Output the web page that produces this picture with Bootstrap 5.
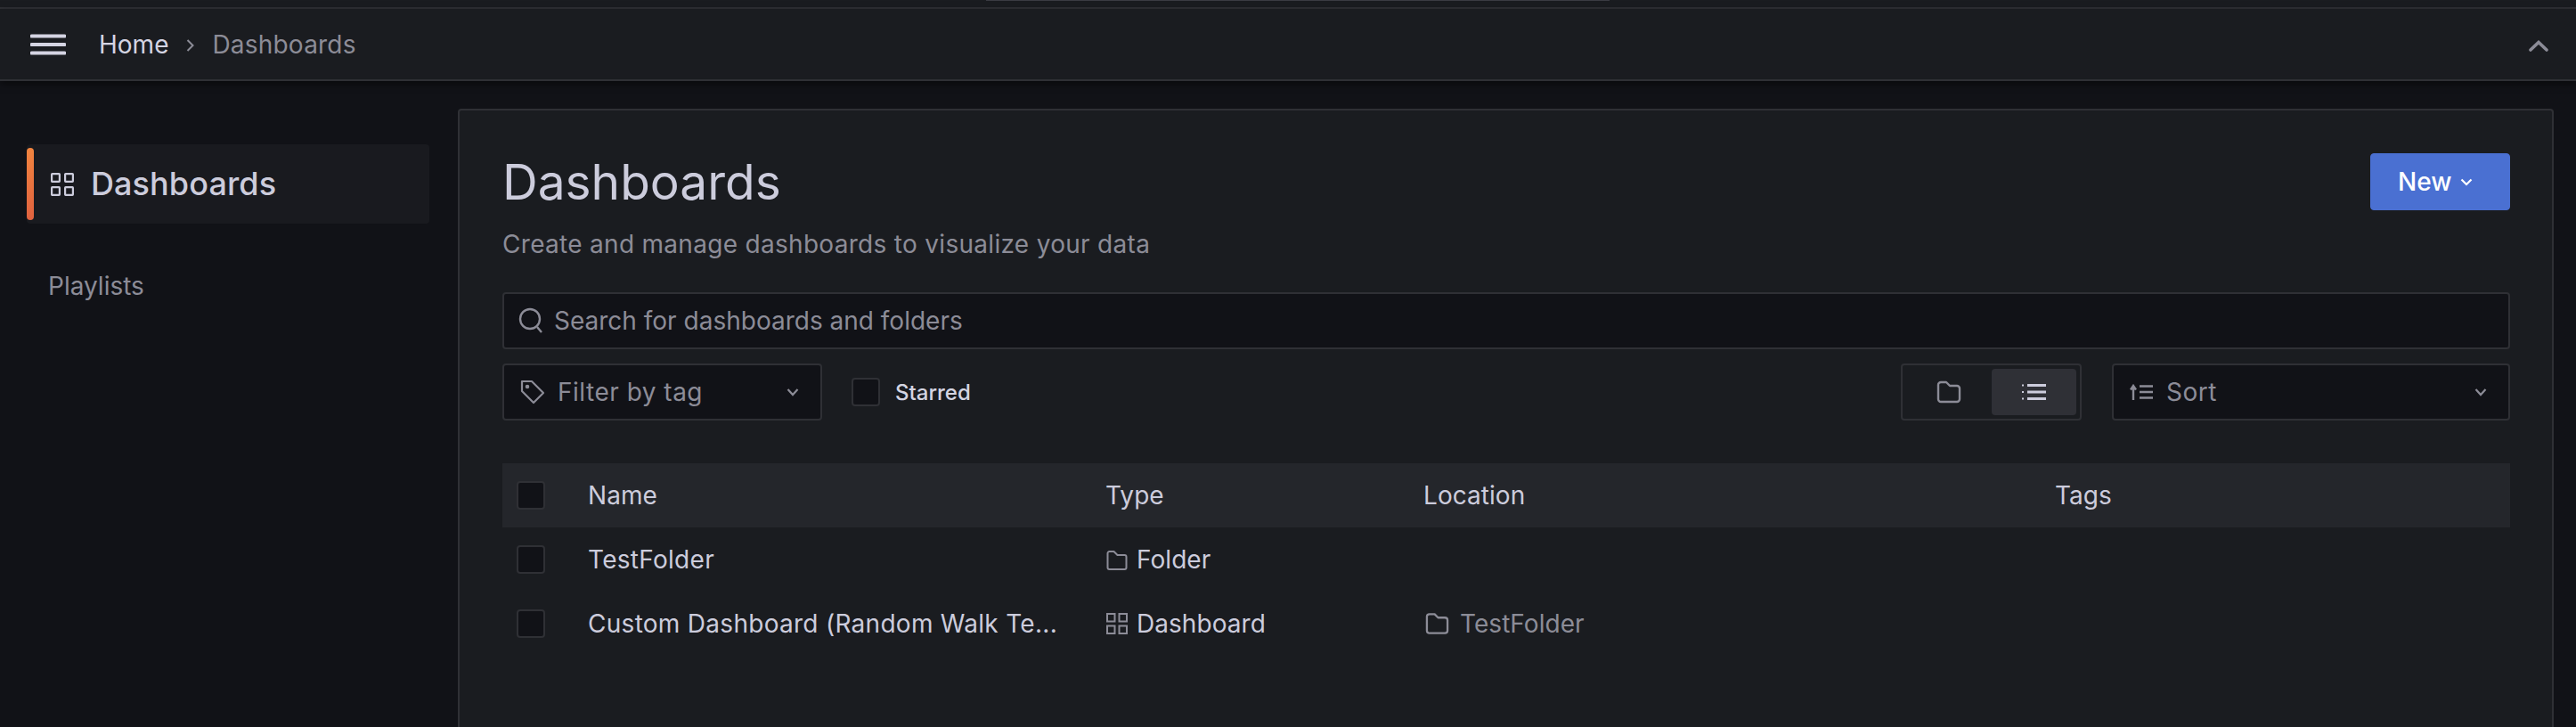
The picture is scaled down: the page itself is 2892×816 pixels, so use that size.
<!DOCTYPE html>
<html lang="en">
<head>
    <meta charset="UTF-8">
    <meta name="viewport" content="width=device-width, initial-scale=1.0">
    <title>Dashboards</title>
    <link href="https://cdn.jsdelivr.net/npm/bootstrap@5.3.0/dist/css/bootstrap.min.css" rel="stylesheet">
    <style>
        body {
            background: #111217;
            color: #ccccdc;
            font-family: Inter, "Liberation Sans", sans-serif;
            font-size: 28px;
            line-height: 1.4;
            height: 816px;
            overflow: hidden;
        }
        svg { display: block; flex: none; }
        .muted-text { color: #8c8c97; }
        .top-strip {
            height: 10px;
            flex: none;
            background: #1a1c20;
            border-bottom: 2px solid #2f3035;
            position: relative;
        }
        .top-strip::before {
            content: "";
            position: absolute;
            top: 0;
            left: 1107px;
            width: 700px;
            height: 1px;
            background: #3a3b42;
        }
        .top-bar {
            height: 81px;
            flex: none;
            background: #1a1c20;
            border-bottom: 2px solid #2f3035;
            padding: 0 31px 0 34px;
            box-shadow: 0 3px 8px rgba(0, 0, 0, .5);
            position: relative;
        }
        .crumb-home { margin: 2px 0 0 37px; color: #d4d4e2; }
        .crumb-sep { margin: 2px 20px 0; }
        .crumb-last { margin-top: 2px; letter-spacing: .2px; }
        .collapse-icon { margin-top: 4px; }
        .side-col { width: 514px; flex: none; padding: 71px 32px 0 30px; }
        .side-active {
            height: 89px;
            background: #191a1f;
            border-radius: 4px;
            padding-left: 27px;
            position: relative;
            font-size: 36px;
            font-weight: 500;
            letter-spacing: .1px;
            gap: 19px;
        }
        .side-active::before {
            content: "";
            position: absolute;
            left: 0;
            top: 4px;
            bottom: 4px;
            width: 8px;
            border-radius: 4px;
            background: linear-gradient(#f2843f, #e0623f);
        }
        .side-link { margin: 51px 0 0 24px; color: #8c8c97; }
        .main-panel {
            flex: 1;
            margin: 31px 25px 0 0;
            background: #1a1c20;
            border: 2px solid #2f3035;
            border-bottom: 0;
            border-radius: 4px 4px 0 0;
            padding: 48px 47px 0 48px;
        }
        .page-title { font-size: 55px; font-weight: 400; line-height: 64px; margin: 0; color: #ccccdc; }
        .page-sub { color: #8c8c97; margin: 19px 0 0; letter-spacing: .3px; }
        .new-btn {
            --bs-btn-bg: #4a70d2;
            --bs-btn-hover-bg: #4a70d2;
            --bs-btn-border-color: #4a70d2;
            --bs-btn-color: #fff;
            --bs-btn-hover-color: #fff;
            --bs-btn-border-radius: 4px;
            width: 157px;
            height: 64px;
            font-size: 28px;
            font-weight: 500;
            gap: 10px;
            padding: 0 0 0 30px;
        }
        .field-box {
            height: 64px;
            background: #111217;
            border: 2px solid #2f3035;
            border-radius: 4px;
            color: #8c8c97;
        }
        .search-box { margin-top: 34px; padding: 0 16px; gap: 12px; }
        .search-box input {
            background: transparent;
            border: 0;
            outline: 0;
            flex: 1;
            padding: 0;
            color: #8c8c97;
            font-size: 28px;
        }
        .search-box input::placeholder { color: #8c8c97; opacity: 1; }
        .tool-row { margin-top: 16px; }
        .tag-box { width: 359px; padding: 0 24px 0 18px; gap: 14px; letter-spacing: .5px; }
        .sort-box { width: 447px; margin-left: 34px; padding: 0 24px 0 18px; gap: 14px; letter-spacing: .5px; }
        .tick-box {
            width: 32px;
            height: 32px;
            margin: 0;
            flex: none;
            background-color: #111217;
            border: 2px solid #2f3035;
            border-radius: 4px;
            appearance: none;
        }
        .starred-text { font-size: 24px; font-weight: 500; margin: 2px 0 0 17px; color: #d4d4e2; }
        .starred-tick { margin-left: 33px; }
        .view-toggle {
            width: 203px;
            height: 64px;
            border: 2px solid #2f3035;
            border-radius: 4px;
            padding: 4px;
        }
        .view-toggle span {
            width: 96px;
            height: 100%;
            border-radius: 4px;
        }
        .view-toggle .view-on { background: #2f3036; margin-left: auto; }
        .result-table { margin-top: 48px; letter-spacing: .05px; }
        .result-row {
            display: grid;
            grid-template-columns: 96px 581px 357px 709px 1fr;
            height: 72px;
            align-items: center;
        }
        .result-head { background: #24262b; }
        .result-row .tick-box { margin-left: 16px; }
        .name-cell { color: #ccccdc; letter-spacing: .28px; }
        .type-cell { gap: 10px; padding-left: 1px; }
        .place-cell { gap: 12px; padding-left: 2px; }
    </style>
</head>
<body class="d-flex flex-column">
    <div class="top-strip"></div>
    <div class="top-bar d-flex align-items-center">
        <svg width="40" height="24" viewBox="0 0 40 24"><path d="M1.500 2.500h37M1.500 12h37M1.500 21.500h37" stroke="#d4d4e2" stroke-width="4" stroke-linecap="round"/></svg>
        <span class="crumb-home">Home</span>
        <svg class="crumb-sep" width="9" height="16" viewBox="0 0 9 16"><path d="M1.500 2l6 6-6 6" fill="none" stroke="#8c8c97" stroke-width="2"/></svg>
        <span class="muted-text crumb-last">Dashboards</span>
        <svg class="collapse-icon ms-auto" width="22" height="13" viewBox="0 0 22 13"><path d="M2 11l9-8.500 9 8.500" fill="none" stroke="#8c8c97" stroke-width="3.600" stroke-linecap="round"/></svg>
    </div>

    <div class="d-flex flex-grow-1">
        <div class="side-col">
            <div class="side-active d-flex align-items-center">
                <svg width="26" height="26" viewBox="0 0 26 26" fill="none" stroke="#ccccdc" stroke-width="2.2"><rect x="1.100" y="1.100" width="8.800" height="8.800" rx=".6"/><rect x="16.100" y="1.100" width="8.800" height="8.800" rx=".6"/><rect x="1.100" y="16.100" width="8.800" height="8.800" rx=".6"/><rect x="16.100" y="16.100" width="8.800" height="8.800" rx=".6"/></svg>
                <span>Dashboards</span>
            </div>
            <div class="side-link">Playlists</div>
        </div>

        <div class="main-panel">
            <div class="d-flex justify-content-between align-items-start">
                <div>
                    <h1 class="page-title">Dashboards</h1>
                    <p class="page-sub">Create and manage dashboards to visualize your data</p>
                </div>
                <button class="btn new-btn d-flex align-items-center">New
                    <svg width="14" height="9" viewBox="0 0 14 9"><path d="M1.500 1.500L7 7l5.500-5.500" fill="none" stroke="#fff" stroke-width="2.200"/></svg>
                </button>
            </div>

            <div class="field-box search-box d-flex align-items-center">
                <svg width="28" height="30" viewBox="0 0 28 30" fill="none" stroke="#8c8c97" stroke-width="2.400"><circle cx="13" cy="13" r="11"/><path d="M21 22l5 6"/></svg>
                <input type="text" placeholder="Search for dashboards and folders">
            </div>

            <div class="tool-row d-flex align-items-center">
                <div class="field-box tag-box d-flex align-items-center">
                    <svg width="28" height="28" viewBox="0 0 28 28" fill="none" stroke="#8c8c97" stroke-width="2.200"><path d="M2 2h11l13 13-11 11L2 13z" stroke-linejoin="round"/><circle cx="8" cy="8" r="1.200" fill="#8c8c97"/></svg>
                    <span>Filter by tag</span>
                    <svg class="ms-auto" width="14" height="10" viewBox="0 0 14 10"><path d="M1.500 2L7 8l5.500-6" fill="none" stroke="#8c8c97" stroke-width="2.200"/></svg>
                </div>
                <input class="tick-box starred-tick" type="checkbox" aria-label="Starred">
                <span class="starred-text">Starred</span>
                <div class="view-toggle d-flex ms-auto">
                    <span class="d-flex align-items-center justify-content-center">
                        <svg width="28" height="26" viewBox="0 0 28 26" fill="none" stroke="#8c8c97" stroke-width="2.400"><path d="M2 5a3 3 0 0 1 3-3h6l4 4h8a3 3 0 0 1 3 3v12a3 3 0 0 1-3 3H5a3 3 0 0 1-3-3z" stroke-linejoin="round"/></svg>
                    </span>
                    <span class="view-on d-flex align-items-center justify-content-center">
                        <svg width="27" height="18" viewBox="0 0 27 18" fill="none" stroke="#ccccdc" stroke-width="3"><path d="M6 1.500h21M6 9h21M6 16.500h21"/><path d="M0 1.500h2M0 9h2M0 16.500h2" stroke-width="2"/></svg>
                    </span>
                </div>
                <div class="field-box sort-box d-flex align-items-center">
                    <svg width="27" height="18" viewBox="0 0 27 18" fill="none" stroke="#8c8c97" stroke-width="2.400"><path d="M4 18V3M1 6.500L4 2l3 4.500M11 2.500h15M11 9h15M11 15.500h15"/></svg>
                    <span>Sort</span>
                    <svg class="ms-auto" width="14" height="10" viewBox="0 0 14 10"><path d="M1.500 2L7 8l5.500-6" fill="none" stroke="#8c8c97" stroke-width="2.200"/></svg>
                </div>
            </div>

            <div class="result-table">
                <div class="result-row result-head">
                    <input class="tick-box" type="checkbox" aria-label="Select all">
                    <span>Name</span>
                    <span>Type</span>
                    <span>Location</span>
                    <span>Tags</span>
                </div>
                <div class="result-row">
                    <input class="tick-box" type="checkbox" aria-label="Select TestFolder">
                    <span class="name-cell">TestFolder</span>
                    <span class="type-cell d-flex align-items-center">
                        <svg width="24" height="23" viewBox="0 0 24 23" fill="none" stroke="#8c8c97" stroke-width="2"><path d="M1.500 4a2 2 0 0 1 2-2h5l4 4h8a2 2 0 0 1 2 2v12a2 2 0 0 1-2 2h-17a2 2 0 0 1-2-2z" stroke-linejoin="round"/></svg>
                        Folder
                    </span>
                    <span></span>
                    <span></span>
                </div>
                <div class="result-row">
                    <input class="tick-box" type="checkbox" aria-label="Select Custom Dashboard">
                    <span class="name-cell">Custom Dashboard (Random Walk Te...</span>
                    <span class="type-cell d-flex align-items-center">
                        <svg width="24" height="24" viewBox="0 0 24 24" fill="none" stroke="#8c8c97" stroke-width="2"><rect x="1" y="1" width="8.500" height="8.500"/><rect x="14.500" y="1" width="8.500" height="8.500"/><rect x="1" y="14.500" width="8.500" height="8.500"/><rect x="14.500" y="14.500" width="8.500" height="8.500"/></svg>
                        Dashboard
                    </span>
                    <span class="place-cell d-flex align-items-center muted-text">
                        <svg width="27" height="26" viewBox="0 0 28 26" fill="none" stroke="#8c8c97" stroke-width="2.400"><path d="M2 5a3 3 0 0 1 3-3h6l4 4h8a3 3 0 0 1 3 3v12a3 3 0 0 1-3 3H5a3 3 0 0 1-3-3z" stroke-linejoin="round"/></svg>
                        TestFolder
                    </span>
                    <span></span>
                </div>
            </div>
        </div>
    </div>

    <script src="https://cdn.jsdelivr.net/npm/bootstrap@5.3.0/dist/js/bootstrap.bundle.min.js"></script>
</body>
</html>
